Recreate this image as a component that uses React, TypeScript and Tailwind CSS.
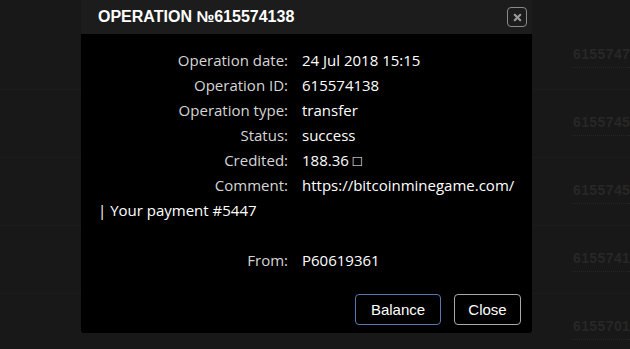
import { X } from 'lucide-react';

const OPERATION_ID = '615574138';

const DETAILS: { label: string; value: string }[] = [
  { label: 'Operation date:', value: '24 Jul 2018 15:15' },
  { label: 'Operation ID:', value: OPERATION_ID },
  { label: 'Operation type:', value: 'transfer' },
  { label: 'Status:', value: 'success' },
  { label: 'Credited:', value: '188.36 \u25A1' },
];

const BG_ROWS = ['6155747', '6155745', '6155745', '6155741', '6155701'];

function DetailRow({ label, children }: { label: string; children: React.ReactNode }) {
  return (
    <div>
      <span className="mr-[14px] inline-block w-[190px] text-right text-[#d6d6d6]">{label}</span>
      <span className="text-white">{children}</span>
    </div>
  );
}

export default function App() {
  return (
    <div className="relative h-[349px] w-[630px] overflow-hidden bg-[#181818] font-['Open_Sans',sans-serif]">
      {/* page behind the overlay */}
      <div className="flex flex-col pt-[22px]">
        {BG_ROWS.map((n, i) => (
          <div key={i} className="flex h-[68px] items-center border-b border-[#1c1c1c] pl-[573px]">
            <span className="whitespace-nowrap border-b border-dotted border-[#262626] pb-[2px] font-['Liberation_Sans',sans-serif] text-[14px] font-bold tracking-[0.4px] text-[#272727]">
              {n}
            </span>
          </div>
        ))}
      </div>

      {/* modal */}
      <div className="absolute left-[81px] top-0 w-[451px]">
        <div className="flex h-[34px] items-center justify-between bg-[#1c1c1c] pl-[17px] pr-[5px]">
          <h2 className="font-['Liberation_Sans',sans-serif] text-[16px] font-bold uppercase text-white">
            Operation №{OPERATION_ID}
          </h2>
          <button className="flex h-[20px] w-[20px] items-center justify-center rounded-[4px] border border-[#8a8a8a]">
            <X size={11} strokeWidth={4.5} className="text-[#9a9a9a]" />
          </button>
        </div>

        <div className="rounded-b-[3px] bg-black pb-[8px] pl-[17px] pr-[16px] pt-[14px] text-[15px] leading-[25px]">
          {DETAILS.map((d) => (
            <DetailRow key={d.label} label={d.label}>
              {d.value}
            </DetailRow>
          ))}
          <DetailRow label="Comment:">https://bitcoinminegame.com/</DetailRow>
          <div className="text-white">| Your payment #5447</div>
          <div className="h-[25px]" />
          <DetailRow label="From:">P60619361</DetailRow>

          <div className="mt-[21px] flex justify-end gap-[13px] font-['Liberation_Sans',sans-serif] text-[15px]">
            <button className="h-[31px] w-[86px] rounded-[4px] border border-[#5579b0] text-white">Balance</button>
            <button className="mr-[-5px] h-[31px] w-[67px] rounded-[4px] border border-[#a8a8a8] text-white">Close</button>
          </div>
        </div>
      </div>
    </div>
  );
}
